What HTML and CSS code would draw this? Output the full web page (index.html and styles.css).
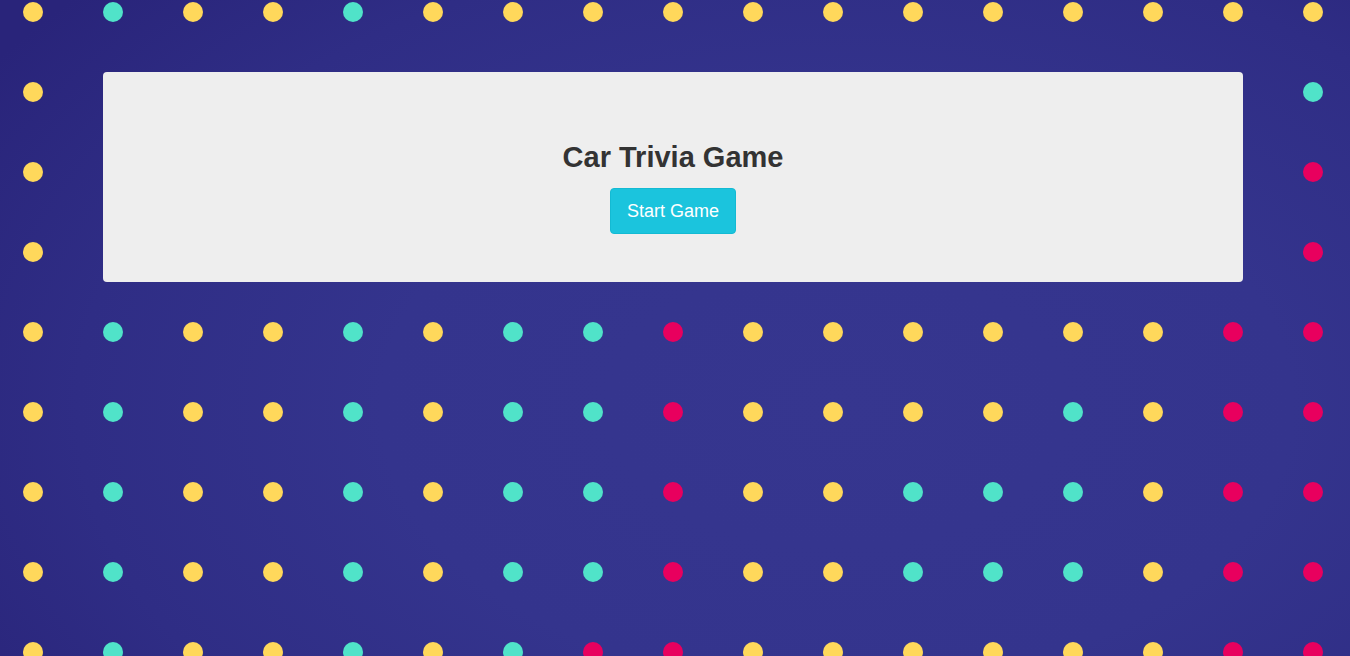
FILE: index.html
```html
<!DOCTYPE html>
<html>
<head>
<meta charset="utf-8">
<link rel="stylesheet" href="styles.css">
</head>
<body>
<div class="board" id="board"></div>
<div class="card">
  <h1 class="title">Car Trivia Game</h1>
  <button class="start">Start Game</button>
</div>
<script src="app.js"></script>
</body>
</html>
```
FILE: app.js
```js
var rows = [
  "YTYYTYYYYYYYYYYYY",
  "YYYYYYYYYYYYYYYYT",
  "YYYYYYYYYYYYYYYYR",
  "YYYYYYYYYYYYYYYYR",
  "YTYYTYTTRYYYYYYRR",
  "YTYYTYTTRYYYYTYRR",
  "YTYYTYTTRYYTTTYRR",
  "YTYYTYTTRYYTTTYRR",
  "YTYYTYTRRYYYYYYRR"
];
var cls = {Y: "dot-y", T: "dot-t", R: "dot-r"};
var board = document.getElementById("board");
rows.forEach(function (r) {
  for (var i = 0; i < r.length; i++) {
    var d = document.createElement("span");
    d.className = "dot " + cls[r[i]];
    board.appendChild(d);
  }
});
```
FILE: styles.css
```css
html, body {
  margin: 0;
  padding: 0;
  height: 100%;
  overflow: hidden;
}
body {
  background: radial-gradient(ellipse 75% 95% at 62% 62%, #36368f 0%, #34348d 45%, #2f2d85 75%, #29247a 100%);
  font-family: "Liberation Sans", Arial, sans-serif;
  position: relative;
}
.board {
  display: grid;
  grid-template-columns: repeat(17, 20px);
  grid-auto-rows: 20px;
  column-gap: 60px;
  row-gap: 60px;
  padding: 2px 0 0 23px;
}
.dot {
  width: 20px;
  height: 20px;
  border-radius: 50%;
  display: block;
}
.dot-y { background: #ffd85b; }
.dot-t { background: #50e3c9; }
.dot-r { background: #e8005e; }
.card {
  position: absolute;
  left: 103px;
  top: 72px;
  width: 1140px;
  height: 210px;
  box-sizing: border-box;
  background: #eeeeee;
  border-radius: 4px;
  display: flex;
  flex-direction: column;
  align-items: center;
  padding-top: 69px;
}
.title {
  margin: 0;
  font-size: 29px;
  line-height: 32px;
  font-weight: bold;
  color: #333333;
}
.start {
  margin-top: 15px;
  width: 126px;
  height: 46px;
  background: #1bc4dd;
  border: 1px solid #14bad3;
  border-radius: 4px;
  color: #ffffff;
  font-family: "Liberation Sans", Arial, sans-serif;
  font-size: 18px;
  padding: 0;
}
```
